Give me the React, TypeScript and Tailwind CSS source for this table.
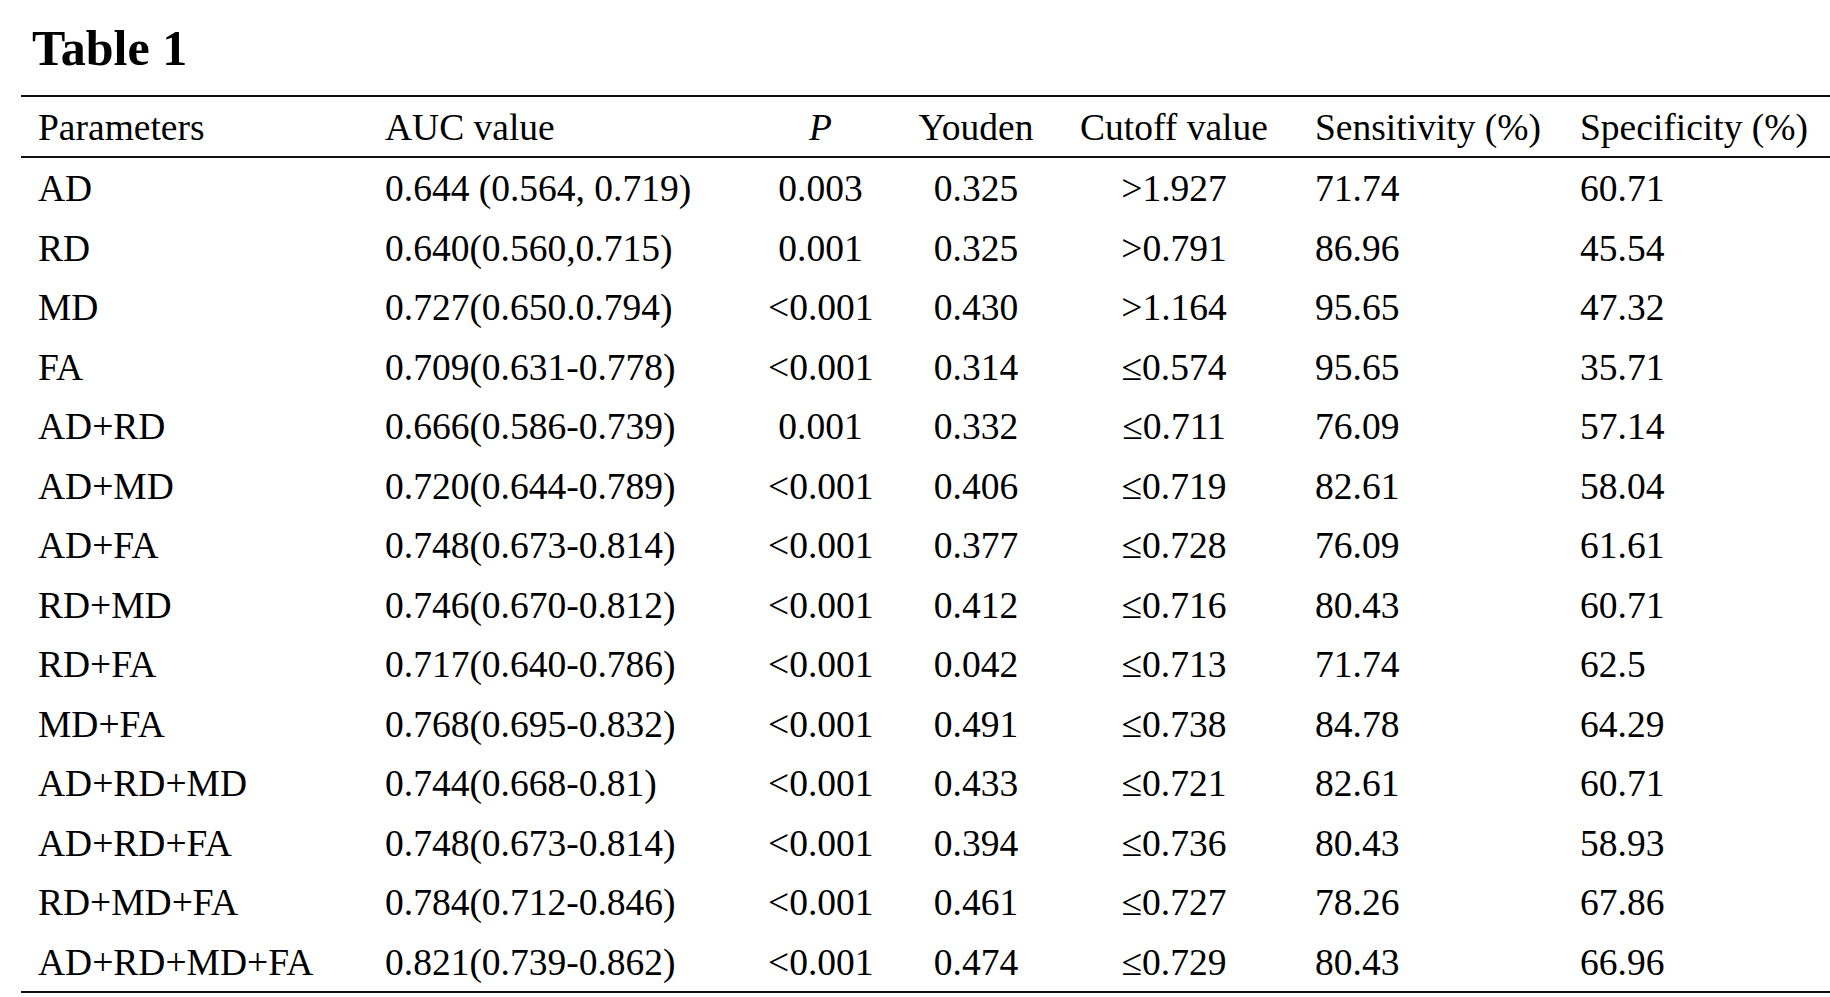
const rows: string[][] = [
  ['AD', '0.644 (0.564, 0.719)', '0.003', '0.325', '>1.927', '71.74', '60.71'],
  ['RD', '0.640(0.560,0.715)', '0.001', '0.325', '>0.791', '86.96', '45.54'],
  ['MD', '0.727(0.650.0.794)', '<0.001', '0.430', '>1.164', '95.65', '47.32'],
  ['FA', '0.709(0.631-0.778)', '<0.001', '0.314', '≤0.574', '95.65', '35.71'],
  ['AD+RD', '0.666(0.586-0.739)', '0.001', '0.332', '≤0.711', '76.09', '57.14'],
  ['AD+MD', '0.720(0.644-0.789)', '<0.001', '0.406', '≤0.719', '82.61', '58.04'],
  ['AD+FA', '0.748(0.673-0.814)', '<0.001', '0.377', '≤0.728', '76.09', '61.61'],
  ['RD+MD', '0.746(0.670-0.812)', '<0.001', '0.412', '≤0.716', '80.43', '60.71'],
  ['RD+FA', '0.717(0.640-0.786)', '<0.001', '0.042', '≤0.713', '71.74', '62.5'],
  ['MD+FA', '0.768(0.695-0.832)', '<0.001', '0.491', '≤0.738', '84.78', '64.29'],
  ['AD+RD+MD', '0.744(0.668-0.81)', '<0.001', '0.433', '≤0.721', '82.61', '60.71'],
  ['AD+RD+FA', '0.748(0.673-0.814)', '<0.001', '0.394', '≤0.736', '80.43', '58.93'],
  ['RD+MD+FA', '0.784(0.712-0.846)', '<0.001', '0.461', '≤0.727', '78.26', '67.86'],
  ['AD+RD+MD+FA', '0.821(0.739-0.862)', '<0.001', '0.474', '≤0.729', '80.43', '66.96'],
]

const grid =
  'grid grid-cols-[364px_383px_105px_206px_190px_311px_1fr] h-[59.5px] pt-[2px] leading-[57.5px] whitespace-nowrap'

function Row({ cells, header }: { cells: string[]; header?: boolean }) {
  return (
    <div className={grid}>
      <div className="pl-[17px]">{cells[0]}</div>
      <div>{cells[1]}</div>
      <div className={header ? 'text-center italic' : 'text-center'}>{cells[2]}</div>
      <div className="text-center">{cells[3]}</div>
      <div className="text-center">{cells[4]}</div>
      <div className="pl-[46px]">{cells[5]}</div>
      <div>{cells[6]}</div>
    </div>
  )
}

export default function App() {
  return (
    <div className="w-[1830px] h-[997px] bg-white text-black font-['Liberation_Serif','Times_New_Roman',serif] overflow-hidden">
      <div className="h-[95px] pt-[23px] pl-[32px]">
        <h1 className="text-[50px] leading-none font-bold">Table 1</h1>
      </div>
      <div className="ml-[21px] text-[37.5px]">
        <div className="border-t-2 border-[#111]" />
        <Row
          header
          cells={['Parameters', 'AUC value', 'P', 'Youden', 'Cutoff value', 'Sensitivity (%)', 'Specificity (%)']}
        />
        <div className="border-t-2 border-[#111] -mt-[0.5px]" />
        {rows.map((r) => (
          <Row key={r[0]} cells={r} />
        ))}
        <div className="border-t-2 border-[#111]" />
      </div>
    </div>
  )
}
